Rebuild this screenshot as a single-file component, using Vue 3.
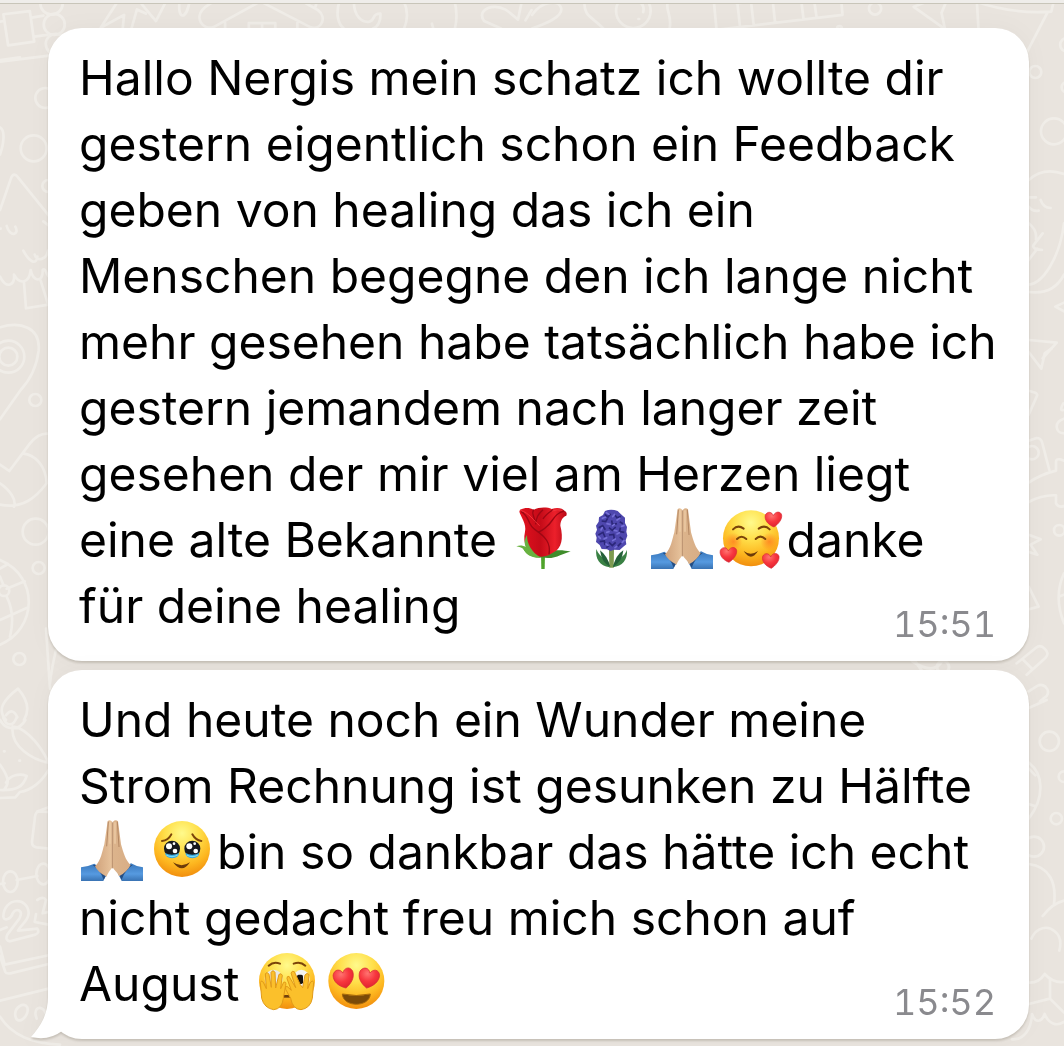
<script setup>
const messages = [
  {
    time: '15:51',
    tail: false,
    lines: [
      ['Hallo Nergis mein schatz ich wollte dir'],
      ['gestern eigentlich schon ein Feedback'],
      ['geben von healing das ich ein'],
      ['Menschen begegne den ich lange nicht'],
      ['mehr gesehen habe tatsächlich habe ich'],
      ['gestern jemandem nach langer zeit'],
      ['gesehen der mir viel am Herzen liegt'],
      ['eine alte Bekannte ', { e: 'rose' }, { e: 'hyacinth' }, { e: 'pray' }, { e: 'loved' }, 'danke'],
      ['für deine healing'],
    ],
  },
  {
    time: '15:52',
    tail: true,
    lines: [
      ['Und heute noch ein Wunder meine'],
      ['Strom Rechnung ist gesunken zu Hälfte'],
      [{ e: 'pray' }, { e: 'tears' }, 'bin so dankbar das hätte ich echt'],
      ['nicht gedacht freu mich schon auf'],
      ['August ', { e: 'peek' }, { e: 'hearts' }],
    ],
  },
]
const boxes = {
  rose: '36 36 207 198',
  hyacinth: '243 36 207 198',
  pray: '447 36 207 198',
  loved: '654 36 207 198',
  tears: '231 30 207 198',
  peek: '36 36 207 198',
  hearts: '243 36 207 198',
}
const names = {
  rose: 'Rose', hyacinth: 'Hyazinthe', pray: 'Gefaltete Hände', loved: 'Lächelndes Gesicht mit Herzen',
  tears: 'Gesicht mit Tränen', peek: 'Durch die Finger blickendes Gesicht', hearts: 'Gesicht mit Herzaugen',
}
</script>

<template>
  <main class="chat">
    <svg class="wallpaper" viewBox="0 0 1064 1046" preserveAspectRatio="xMinYMin slice" aria-hidden="true">
      <g transform="scale(.339)">
        <path d="M10 42 88 33 101 123 24 134ZM0 64 12 62M94 52 128 46M101 108 140 103M0 182 145 164" />
        <circle cx="160" cy="72" r="31" /><circle cx="152" cy="10" r="33" /><circle cx="165" cy="130" r="30" />
        <path d="M350 0 297 82 366 44 362 84M388 84 404 28 430 40M418 12 460 62 492 0M530 0C522 60 550 62 560 0" />
        <path d="M636 0 604 22C570 52 598 90 630 80L768 4 915 80C948 90 966 52 938 30L885 0M664 68V84M877 68V84M734 84V68H812V84M773 68V84M930 22 936 0" />
        <path d="M1002 0C990 40 996 70 1014 84M1044 0C1042 50 1070 68 1090 64 1108 60 1095 40 1122 40 1124 62 1114 80 1100 84M1190 0Q1210 44 1192 84M1340 0Q1352 44 1342 84M1274 70 1278 84M1478 84 1428 62C1412 40 1430 20 1460 20 1490 20 1506 40 1528 58L1540 0M1550 60 1568 30" />
      </g>
      <g transform="translate(532 0) scale(.339)">
        <path d="M0 44C30 0 80 0 86 24 92 50 40 70 0 84M155 0C150 50 180 50 210 84M402 0C390 30 414 40 406 84M536 0 544 84M604 10 646 4 654 74M606 10 614 82M544 88 916 44 912 0M710 0 717 66M794 0 801 56M832 0 839 48M1178 0 1126 20 1210 80M1224 0 1208 38 1218 84M1312 0 1317 84M1312 6Q1420 42 1532 34L1540 0M1520 38 1460 154" />
        <circle cx="299" cy="32" r="51" /><path d="M308 2Q334 10 328 36M314 56h2" />
        <circle cx="1012" cy="25" r="18" /><circle cx="1578" cy="132" r="20" /><circle cx="907" cy="84" r="7" />
      </g>
      <g transform="translate(0 60) scale(.3333)">
        <circle cx="136" cy="114" r="30" /><circle cx="101" cy="265" r="39" /><circle cx="145" cy="378" r="18" />
        <path d="M0 0 60-8M0 202C16 210 12 250 0 284M0 450 34 352Q42 336 54 352L146 466M130 484 146 496M20 498C30 534 60 524 46 500M0 506h2M70 572C90 610 110 614 112 590M104 584C110 606 140 600 144 572M0 650C20 690 45 675 42 644 60 676 88 670 92 630 98 666 130 670 128 630 136 620 142 650 146 650M72 668 78 745 146 734M122 662 144 732" />
        <circle cx="25" cy="890" r="27" /><circle cx="25" cy="890" r="48" />
        <path d="M0 802C60 784 122 800 116 872 110 920 90 960 62 990L0 1078" />
      </g>
      <g transform="translate(0 390) scale(.3333)">
        <circle cx="106" cy="30" r="18" /><circle cx="107" cy="425" r="39" /><circle cx="116" cy="534" r="18" /><circle cx="58" cy="807" r="18" />
        <path d="M0 224 28 243 90 160Q118 126 150 132M68 190C108 194 138 230 140 280 110 320 70 358 0 344M0 280C30 300 50 330 42 350M0 510C120 560 110 720 0 764M0 536 24 522M20 596 74 574M0 690 80 654M0 560 10 584M20 620C40 660 40 700 30 740M138 716 150 896M168 780Q154 840 150 880M18 990C-10 960 10 930 54 896 84 930 90 960 72 990M18 976Q38 950 52 982" /><circle cx="12" cy="602" r="16" />
      </g>
      <g transform="translate(0 720) scale(.3333)">
        <path d="M0 0C20 36 60 30 76 0M10-6C20 20 40 20 50-8M38 20C60 20 110 50 146 128M38 20C30 80 100 120 146 128M12 94h2M58 122h2M0 134C26 170 30 190 12 210M18 188C30 164 60 160 80 168 70 200 50 212 0 210M146 150Q110 208 60 216L46 232 0 234M146 262 114 274Q104 280 104 300L96 366Q96 380 110 382L146 386M112 274 146 276M0 492 14 490M50 480 112 468" />
        <ellipse cx="31" cy="485" rx="22" ry="31" /><ellipse cx="130" cy="462" rx="21" ry="31" />
        <path d="M10 590C12 530 85 530 86 580 84 604 66 610 54 632L112 626Q120 638 106 644L30 664Q14 662 22 644L58 596C72 570 48 562 38 580 34 596 12 606 10 590M112 540Q130 528 138 540L128 580 146 576M108 582 104 606 146 614M0 630 20 622M0 680 14 734 146 706M0 708 16 756Q20 764 40 758L146 732M0 842 146 806M0 890Q50 970 180 974M46 888C42 862 72 844 82 862 90 888 52 920 46 888M110 896C100 870 114 854 132 870L146 900" />
      </g>
      <g transform="translate(1000 0) scale(.3333)">
        <circle cx="106" cy="216" r="18" /><circle cx="162" cy="394" r="39" /><circle cx="200" cy="262" r="15" />
        <path d="M86 540Q130 500 192 522M86 592H108M86 620Q98 636 116 632M122 600Q130 624 152 624M86 670Q112 690 108 718M128 700 100 736Q96 748 126 750M112 746 86 780M192 670C180 770 130 850 86 854M86 876Q160 886 192 824M192 908 166 920 192 934M86 1020 170 1028 128 1075" />
      </g>
      <g transform="translate(1000 350) scale(.3333)">
        <path d="M86 6 124 56 134 10 154-4M86 122 106 128Q114 132 110 140L86 194M86 272 110 264Q122 264 126 276L148 360M86 398Q120 374 168 362V336Q168 326 180 328L192 332M86 456Q126 434 168 436V460Q176 474 192 468M192 180Q176 184 190 160M192 206C160 216 166 250 192 250M86 554 122 568 92 584 112 614 86 606M86 710 116 770 86 778M192 670Q160 740 192 820M176 740 192 734M50 940 110 892Q122 884 134 896 150 910 136 924L80 974M70 930 96 956M86 1024 112 1008Q124 1000 136 1010 150 1024 140 1038L120 1054" />
        <circle cx="96" cy="308" r="20" /><circle cx="178" cy="541" r="16" />
      </g>
      <g transform="translate(1000 700) scale(.3333)">
        <circle cx="148" cy="124" r="29" /><circle cx="192" cy="230" r="16" /><circle cx="169" cy="356" r="17" /><circle cx="102" cy="440" r="30" />
        <path d="M86 24 140 0M86 188C130 220 136 290 86 356M86 206 106 226M86 312 104 318M86 492C150 500 170 550 162 612M192 602Q158 610 128 648M94 716C110 680 144 676 164 694 184 710 184 730 178 752M86 848Q116 850 134 822 160 850 192 846M150 840V896L86 912M150 896 192 938M36 1018C70 1020 94 990 96 942 106 972 126 966 134 942 146 972 170 980 192 966" />
      </g>
      <g>
        <circle cx="943" cy="667" r="6" /><path d="M912 661Q934 676 942 661M915 661 922 671" />
      </g>
    </svg>

    <div class="topbar"></div>

    <article v-for="m in messages" :key="m.time" class="bubble">
      <svg v-if="m.tail" class="tail" viewBox="0 0 44 48" aria-hidden="true">
        <path d="M17 0C18 22 11 34 0 46Q18 50 31 40L44 36V0Z" fill="#fff" />
      </svg>
      <p class="text">
        <span v-for="(line, i) in m.lines" :key="i" class="line"><template v-for="(part, j) in line" :key="j"><template v-if="typeof part === 'string'">{{ part }}</template><svg v-else class="emoji" :viewBox="boxes[part.e]" role="img" :aria-label="names[part.e]">
          <g v-if="part.e === 'rose'">
            <path d="M126 175 127 222H137L138 175Z" fill="#4fa32b" />
            <path d="M130 187C108 190 82 182 72 160 98 166 120 170 132 180 150 164 186 162 215 170 190 174 166 196 130 187Z" fill="#3f8c2b" />
            <path d="M63 44C80 36 92 38 104 44 120 36 145 36 158 42 175 36 192 40 196 48 204 50 204 58 202 62 190 66 184 78 184 92 194 130 188 160 164 172 150 182 132 188 118 184 84 172 70 146 78 110 84 88 64 62 61 50Z" fill="url(#roseFill)" />
            <path d="M66 49C94 66 84 88 108 104 140 126 156 144 150 178M196 48C166 54 162 80 144 94 134 104 124 110 116 112M104 44C96 56 106 62 108 80M132 44C116 58 112 68 110 88M162 44C150 52 140 58 132 72" fill="none" stroke="#9d0713" stroke-width="4" />
            <path d="M64 46C92 54 102 76 122 92M160 48Q174 42 190 46" fill="none" stroke="#f3333b" stroke-width="3" />
            <path d="M84 120C84 148 98 172 126 188 104 190 82 182 73 162 68 158 60 156 52 154 62 150 72 151 80 156 75 144 76 132 84 120Z" fill="#68b240" />
          </g>
          <g v-else-if="part.e === 'hyacinth'">
            <path d="M330 165 331 218H344L345 165Z" fill="#7d9a50" />
            <path d="M292 162C288 192 302 212 332 217 330 194 302 190 292 162Z" fill="#3a8144" />
            <path d="M303 166Q325 182 334 216 308 204 303 166Z" fill="#246038" />
            <path d="M384 164C386 196 370 212 342 217 342 192 374 194 384 164Z" fill="#3a8144" />
            <path d="M373 166Q350 180 342 216 370 200 373 166Z" fill="#246038" />
            <path d="M318 48Q336 40 356 48L366 58 378 68 378 84 384 96 382 110 385 122 380 136 382 148 372 156 362 165 346 164 334 168 324 163 308 162 302 150 291 141 293 128 289 116 294 104 291 92 299 80 300 67 312 60Z" fill="#4e47ae" />
            <path d="M317 58l10 8 8-10M346 58l8 10 12-4M308 78l12 2 6-10M338 76l2 12 14-2M362 80l10 6M299 98l12-6 8 12M330 98l10 8 10-10M364 98l-2 12 14 2M298 120l14-8 6 14M330 120l14-2 2 14M362 126l10 8M302 140l14-2 2 12M330 142l10 10 10-10M356 154l10-10M322 158l8-6" fill="none" stroke="#2b2779" stroke-width="5" />
            <path d="M322 53l8 5M341 65l6-7M310 70l9-3M354 75l8-5M324 86l9 2M368 94l7-2M306 105l4-7M346 106l8 2M315 132l8-4M354 117l7-4M341 137l8-5M370 142l5-5M321 147l6 4M304 130l-5-5M348 158l5-4M330 110l-7 2M346 88l-5 4" fill="none" stroke="#756fd6" stroke-width="5" stroke-linecap="round" />
          </g>
          <g v-else-if="part.e === 'pray'">
            <path d="M453 181Q475 178 493 170L532 198 520 222H453Z" fill="url(#sleeve)" />
            <path d="M639 181Q617 178 603 169L563 198 575 222H639Z" fill="url(#sleeve)" />
            <path d="M496 174Q510 190 531 200L521 218Q510 188 488 174Z" fill="#254e83" />
            <path d="M600 174Q586 190 565 200L575 218Q586 188 608 174Z" fill="#254e83" />
            <path d="M533 42Q540 36 547 44V180C542 190 534 195 530 209Q504 197 495 178C514 160 516 134 523 112Z" fill="url(#skinLeft)" />
            <path d="M549 44Q557 36 564 43L573 112C580 136 586 160 602 174Q590 196 567 208C562 194 552 190 548 180Z" fill="url(#skinRight)" />
            <path d="M547 46V184M535 44 530 118M562 44 567 120" stroke="#b58863" stroke-width="3" fill="none" />
            <path d="M540 46V110M555 46V110" stroke="#edcda7" stroke-width="4" fill="none" />
          </g>
          <g v-else-if="part.e === 'loved'">
            <circle cx="753" cy="130" r="84" fill="url(#face)" />
            <circle cx="700" cy="140" r="27" fill="url(#blush)" /><circle cx="808" cy="140" r="27" fill="url(#blush)" />
            <path d="M699 103Q714 88 731 101M776 101Q794 88 809 103" class="brow" />
            <path d="M711 132Q724 118 739 132M767 132Q781 118 796 132" class="brow" stroke-width="7" />
            <path d="M731 168Q752 184 774 168Q753 202 731 168Z" fill="#6c3b0a" />
            <path v-for="[x, y] in [[820, 72], [685, 178], [812, 196]]" :key="x" :transform="`translate(${x} ${y})`" d="M2 24C-14 18-28 4-24-12-18-24-4-22 0-10 6-24 22-24 25-12 27 2 14 16 2 24Z" fill="url(#heart)" stroke="#d82834" stroke-width="2" />
          </g>
          <g v-else-if="part.e === 'tears'">
            <circle cx="333" cy="120" r="84" fill="url(#face)" />
            <path d="M273 96Q292 94 301 76M364 76Q374 94 391 96" class="brow" />
            <circle cx="303" cy="119" r="24" fill="#17191e" /><circle cx="364" cy="119" r="24" fill="#17191e" />
            <path d="M282 132Q303 142 324 132 324 147 303 148 284 147 282 132ZM343 132Q364 142 385 132 384 147 364 148 345 147 343 132Z" fill="#39a9dc" />
            <path d="M286 138Q303 148 320 138M347 138Q364 148 381 138" stroke="#7bdaf7" stroke-width="4" fill="none" />
            <g fill="#fff"><circle cx="294" cy="112" r="9" /><circle cx="355" cy="112" r="9" /><circle cx="312" cy="126" r="7" /><circle cx="374" cy="126" r="7" /><circle cx="309" cy="104" r="4" /><circle cx="371" cy="104" r="4" /></g>
            <path d="M306 160Q332 177 357 160Q333 196 306 160Z" fill="#6c3b0a" />
          </g>
          <g v-else-if="part.e === 'peek'">
            <circle cx="138" cy="126" r="84" fill="url(#face)" />
            <path d="M83 80Q98 66 117 74M158 74Q178 66 193 80" class="brow" />
            <ellipse cx="98" cy="120" rx="27" ry="28" fill="#e9e9e5" /><ellipse cx="181" cy="120" rx="25" ry="28" fill="#f4f4f0" />
            <rect x="168" y="107" width="18" height="28" rx="5" fill="#17130f" />
            <path d="M108 172H164" stroke="#70400c" stroke-width="8" />
            <g fill="#fbc02b" stroke="#e19a18" stroke-width="3" stroke-linejoin="round">
              <path d="M62 178 58 130Q62 122 68 132L76 149 73 104Q79 96 84 106L91 145 90 100Q96 91 102 100L104 147 114 106Q121 101 124 109L119 149 128 130Q137 126 134 139L127 178Q123 210 98 212 70 208 62 178Z" />
              <path d="M214 178 218 130Q214 121 207 133L200 149 204 107Q198 99 192 108L185 146 178 137 160 98Q153 94 150 102L164 146 144 112Q137 111 138 119L151 154 138 142Q131 143 134 151L149 178Q155 211 180 212 208 208 214 178Z" />
            </g>
          </g>
          <g v-else>
            <circle cx="346" cy="126" r="84" fill="url(#face)" />
            <path v-for="[x, r] in [[308, -12], [384, 12]]" :key="x" :transform="`translate(${x} 114) rotate(${r})`" d="M0 34C-20 24-34 8-30-12-22-30-4-26 0-12 6-26 24-30 30-12 33 8 18 24 0 34Z" fill="url(#heart)" stroke="#d52b34" stroke-width="2" />
            <path d="M304 165Q346 174 388 165C386 206 306 206 304 165Z" fill="#7a4a08" stroke="#a66809" stroke-width="3" />
          </g>
        </svg></template></span>
      </p>
      <time class="time">{{ m.time }}</time>
    </article>

    <svg class="defs" width="0" height="0" aria-hidden="true">
      <defs>
        <linearGradient id="roseFill"><stop offset="0" stop-color="#e3121f" /><stop offset=".45" stop-color="#c50b18" /><stop offset=".75" stop-color="#ec202b" /><stop offset="1" stop-color="#b80916" /></linearGradient>
        <radialGradient id="face" cx=".5" cy=".22" r=".8"><stop offset="0" stop-color="#fffa8c" /><stop offset=".38" stop-color="#ffdf4a" /><stop offset=".72" stop-color="#fdb61f" /><stop offset="1" stop-color="#f08a0c" /></radialGradient>
        <radialGradient id="blush"><stop offset="0" stop-color="#ff7a1f" stop-opacity=".75" /><stop offset="1" stop-color="#ff7a1f" stop-opacity="0" /></radialGradient>
        <radialGradient id="heart" cx=".4" cy=".25" r=".8"><stop offset="0" stop-color="#ff7471" /><stop offset=".5" stop-color="#f7363e" /><stop offset="1" stop-color="#dc1f2d" /></radialGradient>
        <linearGradient id="skinLeft"><stop offset="0" stop-color="#d0a27b" /><stop offset="1" stop-color="#e8c49d" /></linearGradient>
        <linearGradient id="skinRight"><stop offset="0" stop-color="#dcb48c" /><stop offset="1" stop-color="#d8ad85" /></linearGradient>
        <linearGradient id="sleeve" x2="0" y2="1"><stop offset="0" stop-color="#3977bb" /><stop offset=".6" stop-color="#569ae0" /><stop offset="1" stop-color="#3973b3" /></linearGradient>
      </defs>
    </svg>
  </main>
</template>

<style>
body {
  margin: 0;
}
</style>

<style scoped>
.chat {
  position: relative;
  box-sizing: border-box;
  display: flex;
  flex-direction: column;
  gap: 9px;
  min-height: 100vh;
  padding: 0 35px 7px 48px;
  overflow: hidden;
  background: #e9e4de;
  font-family: Inter, "Liberation Sans", sans-serif;
}
.wallpaper {
  position: absolute;
  inset: 0;
  width: 100%;
  height: 100%;
  fill: none;
}
.wallpaper g {
  stroke: #f0ede8;
  stroke-width: 8;
  stroke-linecap: round;
  stroke-linejoin: round;
}
.wallpaper g:last-child {
  stroke-width: 3;
}
.topbar {
  position: relative;
  height: 3px;
  margin: 0 -35px 15px -48px;
  border-bottom: 1px solid #c8c5b9;
  background: #efedea;
}
.bubble {
  position: relative;
  display: grid;
  grid-template-columns: minmax(0, 1fr);
  padding: 17px 33px 22px 31px;
  border-radius: 34px;
  background: #fff;
  filter: drop-shadow(0 2px 1px rgba(70, 60, 40, 0.2)) drop-shadow(0 0 10px rgba(0, 0, 0, 0.03));
}
.text,
.time {
  grid-area: 1 / 1;
}
.text {
  margin: 0;
  color: #000;
  font-size: 48px;
  line-height: 66px;
}
.line {
  display: block;
  height: 66px;
  white-space: pre;
}
.emoji {
  width: 69px;
  height: 66px;
  vertical-align: top;
}
.brow {
  fill: none;
  stroke: #7b4409;
  stroke-width: 6;
  stroke-linecap: round;
}
.time {
  align-self: end;
  justify-self: end;
  color: #8a8a8e;
  font-size: 36px;
  font-variant-numeric: tabular-nums;
  line-height: 30px;
}
.tail {
  position: absolute;
  left: -17px;
  bottom: 0;
  width: 44px;
  height: 48px;
}
.defs {
  position: absolute;
}
</style>
